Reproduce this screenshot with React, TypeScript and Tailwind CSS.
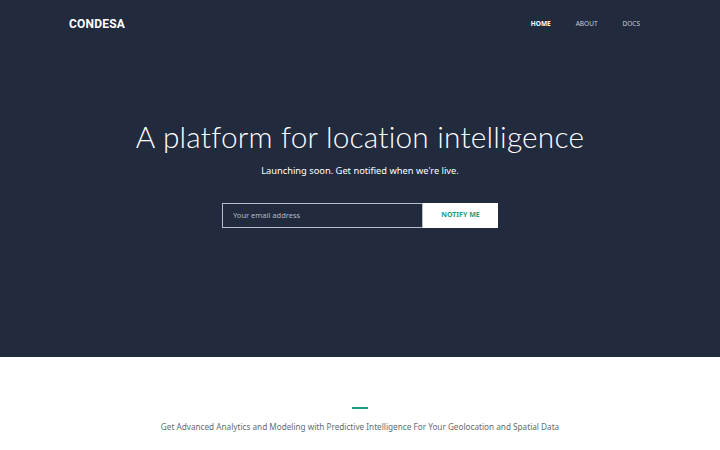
export default function App() {
  return (
    <div className="min-h-screen bg-white" style={{ fontFamily: "'Open Sans', sans-serif" }}>
      <section className="h-[357px] bg-[#222a3d] flex flex-col">
        <header className="flex items-center justify-between pl-[69px] pr-[80px] h-[47px]">
          <div className="font-['Roboto'] font-bold text-[12px] text-white tracking-[0.2px]">CONDESA</div>
          <nav className="flex items-center gap-[25px] text-[6.5px] font-['Noto_Sans']">
            <a className="text-white font-bold">HOME</a>
            <a className="text-[#c9ced8]">ABOUT</a>
            <a className="text-[#c9ced8]">DOCS</a>
          </nav>
        </header>
        <div className="flex flex-col items-center mt-[70px]">
          <h1 className="font-['Lato'] font-light text-[29.8px] leading-[40px] text-white tracking-[0.2px]">
            A platform for location intelligence
          </h1>
          <p className="mt-[7px] font-['Noto_Sans'] text-[9.3px] text-white">Launching soon. Get notified when we're live.</p>
          <form className="mt-[25px] flex" onSubmit={e => e.preventDefault()}>
            <input
              placeholder="Your email address"
              className="w-[201px] h-[25px] border border-[#b9bec8] bg-transparent px-[10px] text-[7.5px] font-['Noto_Sans'] text-white placeholder:text-[#b4bac6] outline-none"
            />
            <button className="w-[75px] h-[25px] bg-white text-[#1e9c7d] text-[7px] font-bold font-['Noto_Sans']">
              NOTIFY ME
            </button>
          </form>
        </div>
      </section>
      <section className="flex flex-col items-center pt-[50px]">
        <div className="w-[16px] h-[2px] bg-[#1e9c7d]" />
        <p className="mt-[12px] font-['Noto_Sans'] text-[8.2px] text-[#666b73]">
          Get Advanced Analytics and Modeling with Predictive Intelligence For Your Geolocation and Spatial Data
        </p>
      </section>
    </div>
  )
}
